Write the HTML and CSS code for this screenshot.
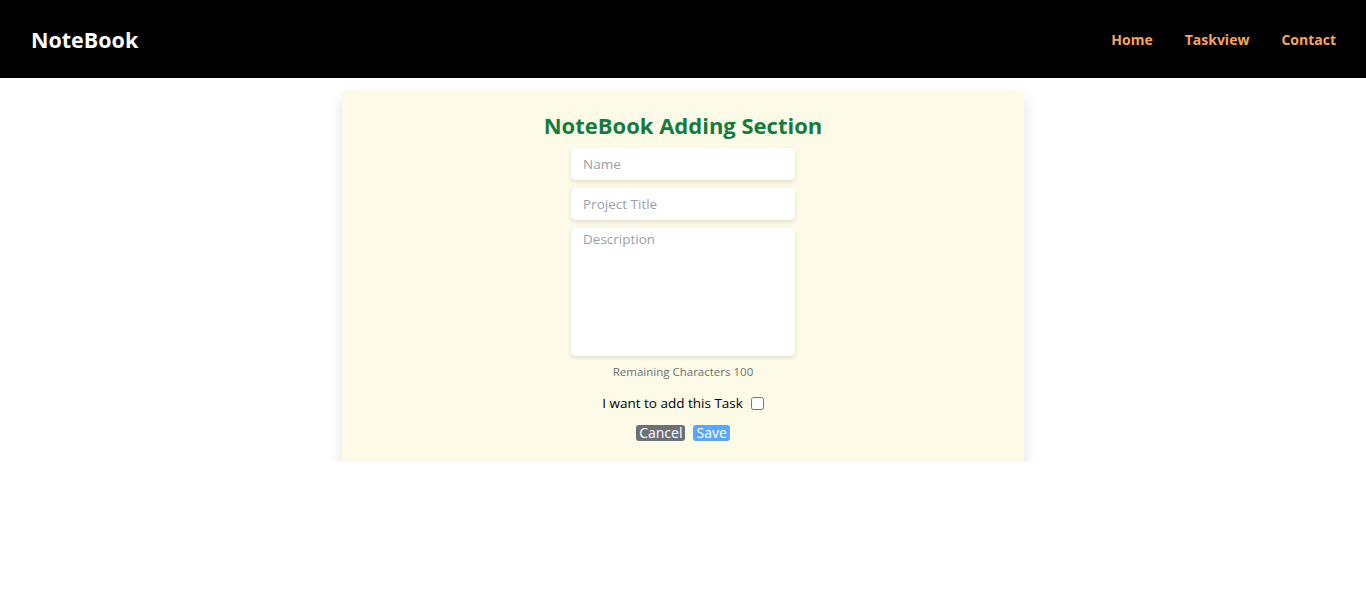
FILE: index.html
```html
<!DOCTYPE html>
<html lang="en">
<head>
<meta charset="utf-8">
<title>NoteBook</title>
<link rel="stylesheet" href="styles.css">
</head>
<body>
<header class="topbar">
  <div class="brand">NoteBook</div>
  <nav class="nav">
    <a href="#">Home</a>
    <a href="#">Taskview</a>
    <a href="#">Contact</a>
  </nav>
</header>
<main class="page">
  <section class="card">
    <h1 class="title">NoteBook Adding Section</h1>
    <form class="form">
      <input class="field" type="text" placeholder="Name">
      <input class="field" type="text" placeholder="Project Title">
      <textarea class="field area" placeholder="Description"></textarea>
      <div class="remaining">Remaining Characters 100</div>
      <label class="check">I want to add this Task <input type="checkbox"></label>
      <div class="actions">
        <button type="button" class="btn cancel">Cancel</button>
        <button type="button" class="btn save">Save</button>
      </div>
    </form>
  </section>
</main>
</body>
</html>
```
FILE: styles.css
```css
* { box-sizing: border-box; }
body {
  margin: 0;
  font-family: "Open Sans", "DejaVu Sans", sans-serif;
  background: #fff;
  color: #000;
}
.topbar {
  height: 78px;
  background: #000;
  display: flex;
  align-items: center;
  justify-content: space-between;
  padding: 0 30px 0 31px;
}
.brand {
  color: #fff;
  font-weight: 700;
  font-size: 21.5px;
}
.nav {
  display: flex;
  gap: 32px;
}
.nav a {
  color: #f7a55a;
  font-weight: 700;
  font-size: 14px;
  text-decoration: none;
}
.page {
  display: flex;
  justify-content: center;
  padding-top: 14px;
}
.card {
  width: 682px;
  background: #fefae8;
  box-shadow: 0 6px 14px rgba(0,0,0,0.12);
  padding: 18px 0 21px;
  display: flex;
  flex-direction: column;
  align-items: center;
}
.title {
  margin: 0 0 8px;
  font-size: 22px;
  font-weight: 700;
  color: #177a3d;
  line-height: 30px;
}
.form {
  display: flex;
  flex-direction: column;
  align-items: center;
}
.field {
  width: 224px;
  height: 32px;
  border: none;
  border-radius: 5px;
  background: #fff;
  box-shadow: 0 2px 4px rgba(0,0,0,0.12);
  padding: 0 12px;
  font-family: inherit;
  font-size: 13.5px;
  margin-bottom: 8px;
  outline: none;
}
.field::placeholder { color: #9a9fa6; }
.area {
  height: 128px;
  padding: 2px 12px;
  resize: none;
  margin-bottom: 6px;
}
.remaining {
  font-size: 11.5px;
  color: #6c6f73;
  line-height: 20px;
  margin-bottom: 12px;
}
.check {
  font-size: 13.5px;
  display: flex;
  align-items: center;
  gap: 8px;
  line-height: 18px;
  margin-bottom: 13px;
}
.check input { margin: 0; width: 13px; height: 13px; }
.actions {
  display: flex;
  gap: 8px;
}
.btn {
  border: none;
  font-family: inherit;
  font-size: 14px;
  line-height: 16px;
  padding: 0 3px;
  border-radius: 3px;
  color: #fff;
}
.cancel { background: #6c7079; }
.save { background: #5aa6ff; }
```
